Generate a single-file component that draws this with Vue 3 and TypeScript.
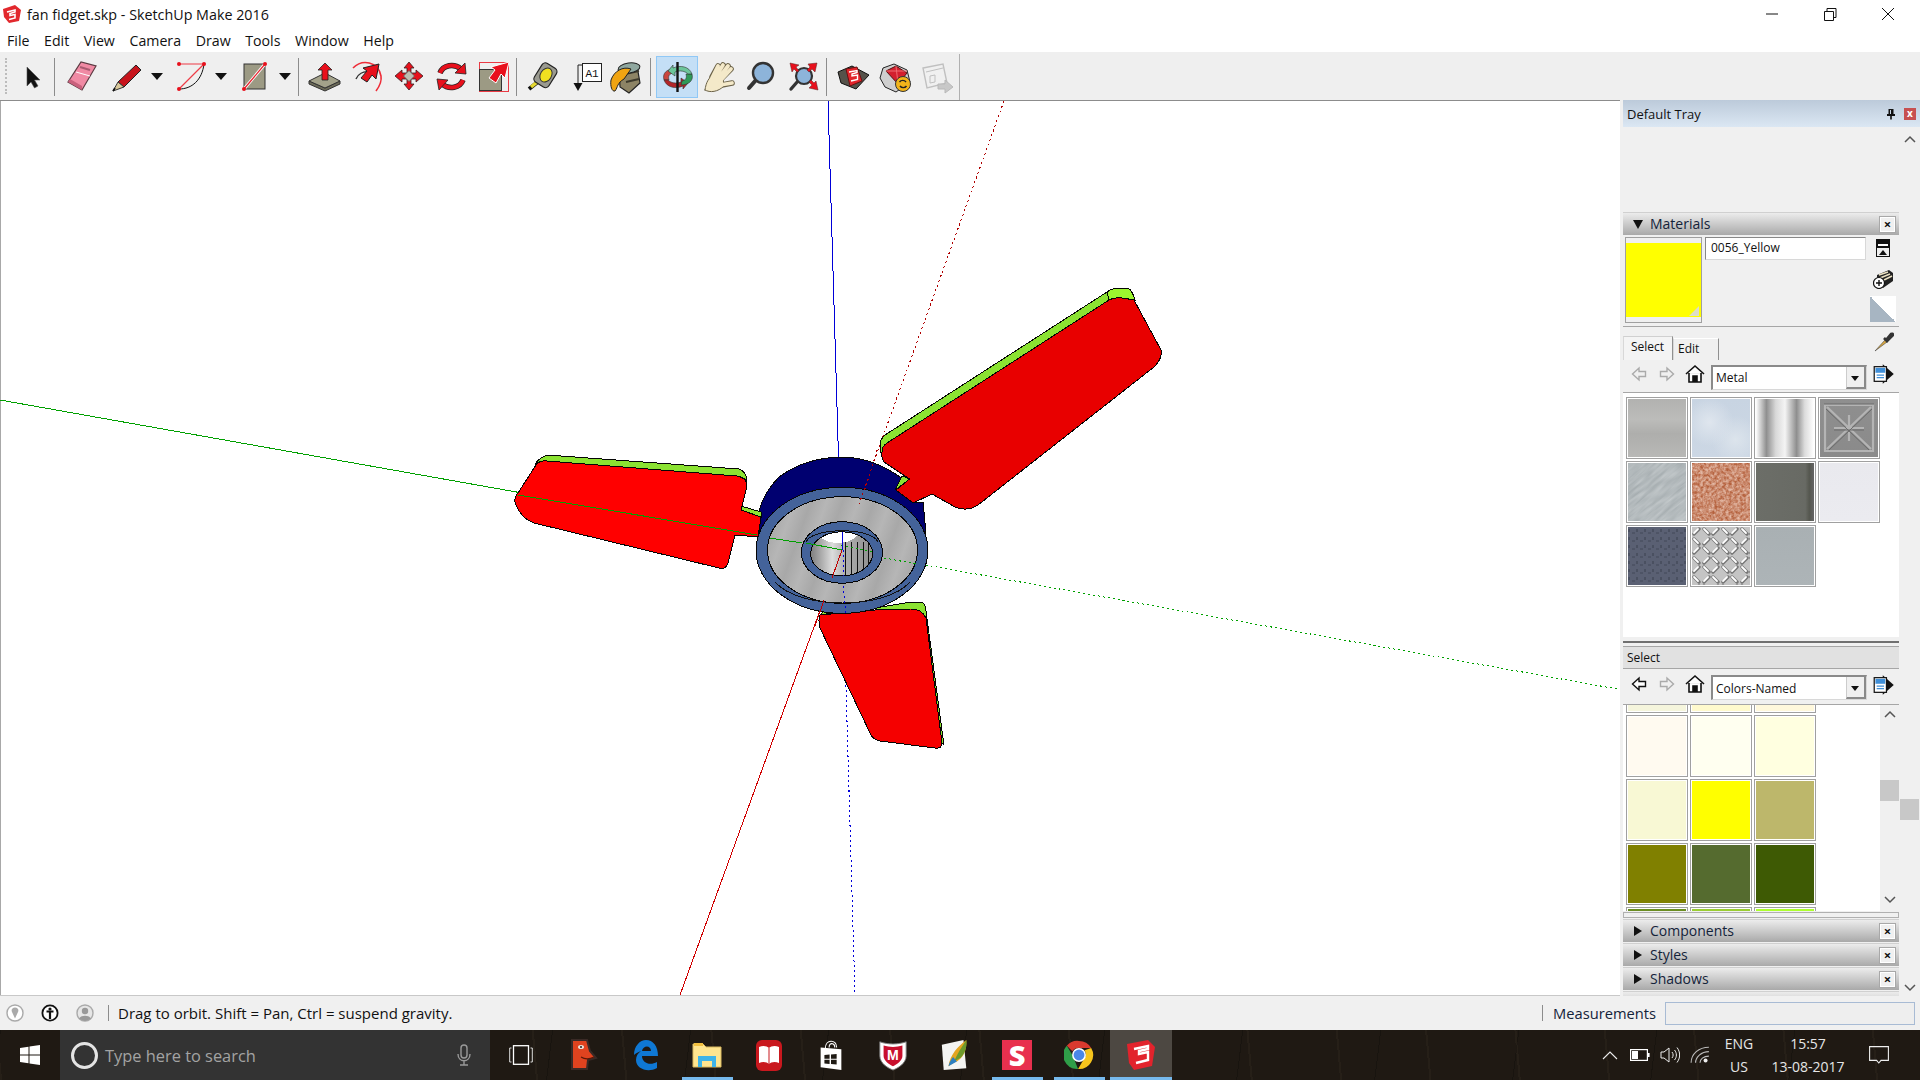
<script setup lang="ts">
const menuItems = ['File', 'Edit', 'View', 'Camera', 'Draw', 'Tools', 'Window', 'Help']
const metalSwatches = ['tex-1', 'tex-2', 'tex-3', 'tex-4', 'tex-5', 'tex-6', 'tex-7', 'tex-8', 'tex-9', 'tex-10', 'tex-11']
const namedColors = [
  '#f5f5dc', '#fffacd', '#fff8dc',
  '#fffaf0', '#fffff0', '#ffffe0',
  '#f8f8d4', '#ffff00', '#bdb76b',
  '#808000', '#556b2f', '#3e5a04',
  '#6b8e23', '#9acd32', '#adff2f',
]
const closedPanels = ['Components', 'Styles', 'Shadows']
const hatchLines = [845, 851, 857, 863, 868]
</script>

<template>
  <div class="app">
    <header class="titlebar">
      <svg class="title-logo" viewBox="0 0 18 18">
        <path d="M0 4 L12 0 L18 5 L16 16 L6 18 L1 12 Z" fill="#e2282d" />
        <path d="M4 7 L12 5 V7 L7 8.5 V10.5 L12 9.5 V13 L6 14.5" stroke="#fff" stroke-width="1.6" fill="none" />
      </svg>
      <span class="title-text">fan fidget.skp - SketchUp Make 2016</span>
      <div class="window-controls">
        <svg viewBox="0 0 14 14"><path d="M1 7 H13" stroke="#111" fill="none" /></svg>
        <svg viewBox="0 0 14 14"><path d="M1.5 4.5 H10.5 V13.5 H1.5 Z M4 4 V1.5 H13 V10.5 H11" stroke="#111" fill="none" /></svg>
        <svg viewBox="0 0 14 14"><path d="M1 1 L13 13 M13 1 L1 13" stroke="#111" fill="none" /></svg>
      </div>
    </header>

    <nav class="menubar">
      <span v-for="item in menuItems" :key="item">{{ item }}</span>
    </nav>

    <div class="toolbar">
      <i class="grip"></i>
      <button class="tool">
        <svg viewBox="0 0 42 42"><path d="M17 11 V30 L21 26 L24.5 32 L28 30 L24.5 24 L30 24 Z" fill="#111" stroke="#555" stroke-width=".6" /></svg>
      </button>
      <i class="sep"></i>
      <button class="tool tool--gap">
        <svg viewBox="0 0 42 42">
          <path d="M8 26 L21 6 L36 10 L22 34 Z" fill="#f08aa4" stroke="#5b3a42" stroke-width="1.2" />
          <path d="M8 26 L22 34 L22 30 L10 23 Z" fill="#c9607c" />
          <path d="M16 16 L30 20" stroke="#fff" stroke-width="1" />
          <path d="M20 11 L30 14" stroke="#a95a70" stroke-width="2" />
        </svg>
      </button>
      <button class="tool">
        <svg viewBox="0 0 42 42">
          <path d="M12 26 L30 9 L35 14 L18 31 Z" fill="#c8141c" stroke="#222" stroke-width="1" />
          <path d="M12 26 L18 31 L7 35 Z" fill="#d9c89a" stroke="#333" stroke-width="1" />
          <path d="M7 35 L9 32" stroke="#111" stroke-width="1.6" />
        </svg>
      </button>
      <i class="dd"></i>
      <button class="tool">
        <svg viewBox="0 0 42 42">
          <path d="M34 8 C32 24 22 33 9 33" stroke="#111" stroke-width="1" fill="none" />
          <path d="M9 8 H34 L9 33" stroke="#ee3b46" stroke-width="1.2" fill="none" />
          <circle cx="9" cy="8" r="2" fill="#e8101c" /><circle cx="34" cy="8" r="2" fill="#e8101c" /><circle cx="9" cy="33" r="2" fill="#e8101c" />
        </svg>
      </button>
      <i class="dd"></i>
      <button class="tool">
        <svg viewBox="0 0 42 42">
          <rect x="10" y="8" width="21" height="25" fill="#9c9a84" stroke="#333" />
          <path d="M31 8 L10 33" stroke="#fff" stroke-width="3" />
          <path d="M31 8 L10 33" stroke="#e8202c" stroke-width="1.2" />
          <circle cx="31" cy="8" r="2" fill="#e8101c" /><circle cx="10" cy="33" r="2" fill="#e8101c" />
        </svg>
      </button>
      <i class="dd dd--last"></i>
      <i class="sep"></i>
      <button class="tool">
        <svg viewBox="0 0 42 42">
          <path d="M5 25 V28 L21 35 L36 28 V25 L21 32 Z" fill="#6c6b58" stroke="#333" />
          <path d="M5 25 L21 17 L36 25 L21 32 Z" fill="#a3a28a" stroke="#333" />
          <path d="M21 7 L28 14 H24 V24 H18 V14 H14 Z" fill="#e8101c" stroke="#222" stroke-width=".8" />
        </svg>
      </button>
      <button class="tool">
        <svg viewBox="0 0 42 42">
          <path d="M7 12 C16 3 32 5 35 20 C36 26 33 31 30 35" stroke="#ee2d38" stroke-width="1.6" fill="none" />
          <path d="M10 23 C12 18 17 15 23 16" stroke="#333" stroke-width="1.4" fill="none" />
          <path d="M33 8 L30 23 L26 19 L21 26 L15 22 L21 15 L17 12 Z" fill="#e8101c" stroke="#222" stroke-width="1" />
        </svg>
      </button>
      <button class="tool">
        <svg viewBox="0 0 42 42">
          <path d="M21 6 L26 12 H23 V17 H28 V14 L35 20 L28 26 V23 H23 V28 H26 L21 34 L16 28 H19 V23 H14 V26 L7 20 L14 14 V17 H19 V12 H16 Z" fill="#e8101c" stroke="#322" stroke-width=".8" />
          <path d="M21 14.5 L26.5 20 L21 25.5 L15.5 20 Z" fill="#bdbdb2" stroke="#555" stroke-width=".8" />
        </svg>
      </button>
      <button class="tool">
        <svg viewBox="0 0 42 42">
          <path d="M10 17 C13 9 24 7 31 13" stroke="#222" stroke-width="5.5" fill="none" />
          <path d="M10 17 C13 9 24 7 31 13" stroke="#e8101c" stroke-width="4" fill="none" />
          <path d="M25 17 L35 7 L36 18 Z" fill="#e8101c" stroke="#222" stroke-width=".8" />
          <path d="M33 24 C30 32 19 34 12 28" stroke="#222" stroke-width="5.5" fill="none" />
          <path d="M33 24 C30 32 19 34 12 28" stroke="#e8101c" stroke-width="4" fill="none" />
          <path d="M18 24 L7 23 L9 34 Z" fill="#e8101c" stroke="#222" stroke-width=".8" />
        </svg>
      </button>
      <button class="tool">
        <svg viewBox="0 0 42 42">
          <rect x="7.5" y="6.5" width="29" height="29" fill="none" stroke="#e93a44" />
          <rect x="7.5" y="13.5" width="22" height="21" fill="#9c9a84" stroke="#333" />
          <path d="M37 6 L33 22 L29 18 L24 27 L17 22 L23 14 L19 11 Z" fill="#e8101c" stroke="#fff" stroke-width="1" />
        </svg>
      </button>
      <i class="sep"></i>
      <button class="tool">
        <svg viewBox="2 0 42 42">
          <path d="M9 33 L19 25" stroke="#111" stroke-width="4" />
          <path d="M11 31 L21 23" stroke="#e4d830" stroke-width="3.4" />
          <rect x="17" y="8" width="17" height="22" rx="4" transform="rotate(32 25 19)" fill="#9a9a90" stroke="#222" stroke-width="1.2" />
          <ellipse cx="26" cy="19" rx="5.5" ry="7.5" transform="rotate(32 26 19)" fill="#f0e020" stroke="#333" />
        </svg>
      </button>
      <button class="tool">
        <svg viewBox="0 0 42 42">
          <path d="M18 9 H14 V28" stroke="#222" fill="none" />
          <path d="M9.5 27 H18.5 L14 35 Z" fill="#111" />
          <rect x="18.5" y="7.5" width="19" height="18" fill="#fff" stroke="#222" />
          <text x="28" y="20.5" class="a1">A1</text>
        </svg>
      </button>
      <button class="tool">
        <svg viewBox="4 0 42 42">
          <path d="M17 12 L35 10 L38 27 L27 37 L18 31 Z" fill="#8d8465" stroke="#222" stroke-width="1.2" />
          <path d="M23 18 L37 15 M24 26 L37 23" stroke="#3d3a2c" stroke-width="2" />
          <ellipse cx="27" cy="12" rx="11" ry="5" transform="rotate(-8 27 12)" fill="#8fa79f" stroke="#222" />
          <path d="M29 13 C21 10 12 15 9 24 C8 30 10 36 13 35 C16 31 15 27 22 23 Z" fill="#f0a412" stroke="#222" />
        </svg>
      </button>
      <i class="sep"></i>
      <button class="tool tool--active">
        <svg viewBox="0 0 42 42">
          <path d="M8 24 C6 17 11 13 18 13 L17 17 C13 18 12 20 13 24 Z" fill="#c9473f" stroke="#333" stroke-width=".6" />
          <path d="M8 24 C11 32 20 33 27 30 V33 L32 27 L25 22 V26 C20 28 15 27 12 24 Z" fill="#b3262a" stroke="#333" stroke-width=".6" />
          <path d="M36 18 C38 25 32 29 25 29 L26 25 C30 24 31 22 30 18 Z" fill="#2f9a58" stroke="#333" stroke-width=".6" />
          <path d="M36 18 C33 10 24 9 17 12 V9 L12 15 L19 20 V16 C24 14 29 15 32 18 Z" fill="#6cc59a" stroke="#333" stroke-width=".6" />
          <path d="M21.5 6 V36" stroke="#111" stroke-width="2.4" />
        </svg>
      </button>
      <button class="tool">
        <svg viewBox="0 0 42 42" stroke-linecap="round">
          <g stroke="#6b6248" stroke-width="5.6" fill="none">
            <path d="M14 21 L20 10 M17 21 L25 9 M20 22 L30 10 M22 24 L33 13 M24 29 L34 27" />
          </g>
          <path d="M7 34 C8 26 11 21 16 19 L25 22 L26 30 C20 36 12 37 7 34 Z" fill="#f4e9c9" stroke="#6b6248" />
          <g stroke="#f4e9c9" stroke-width="3.8" fill="none">
            <path d="M14 22 L20 10 M17 22 L25 9 M20 23 L30 10 M22 25 L33 13 M22 29 L34 27" />
          </g>
        </svg>
      </button>
      <button class="tool">
        <svg viewBox="0 0 42 42">
          <path d="M16 24 L9 32" stroke="#333" stroke-width="4" stroke-linecap="round" />
          <circle cx="23" cy="17" r="10" fill="#8db4da" stroke="#333" stroke-width="2.4" />
        </svg>
      </button>
      <button class="tool">
        <svg viewBox="0 0 42 42">
          <path d="M16 25 L9 33" stroke="#333" stroke-width="3.4" stroke-linecap="round" />
          <circle cx="22" cy="20" r="8" fill="#8db4da" stroke="#333" stroke-width="2.2" />
          <path d="M8 7 L17 9 L14 11 L17 15 L15 16 L12 13 L10 16 Z M35 7 L33 16 L30 13 L27 16 L25 14 L28 11 L26 8 Z M36 34 L27 32 L30 29 L27 26 L29 24 L32 27 L34 25 Z" fill="#e8101c" stroke="#522" stroke-width=".5" />
        </svg>
      </button>
      <i class="sep"></i>
      <button class="tool">
        <svg viewBox="0 0 42 42">
          <path d="M6 16 L20 10 L37 19 L24 33 L9 27 Z" fill="#55524a" stroke="#111" />
          <path d="M14 13 L25 11 L30 25 L18 30 Z" fill="#e3242b" stroke="#611" />
          <path d="M17 16 L25 14.5 V16.5 L20 18 V20 L25.5 19 V23.5 L19 25" stroke="#fff" stroke-width="1.4" fill="none" />
        </svg>
      </button>
      <button class="tool">
        <svg viewBox="0 0 42 42">
          <path d="M6 22 L9 12 L20 8 L33 14 L36 26 L22 36 L11 31 Z" fill="#cfcfcf" stroke="#222" />
          <path d="M12 15 L22 10 L33 17 L24 28 Z" fill="#d3202e" stroke="#511" />
          <path d="M12 15 H33 M22 10 L24 28" stroke="#f06a70" />
          <circle cx="29" cy="28" r="7.5" fill="#f2b41a" stroke="#333" />
          <path d="M25.5 26 A4 4 0 0 1 32 26 M32.5 30 A4 4 0 0 1 26 30" stroke="#222" stroke-width="1.4" fill="none" />
        </svg>
      </button>
      <button class="tool">
        <svg viewBox="0 0 42 42" opacity=".45">
          <path d="M7 12 L27 8 L31 27 L11 32 Z" fill="#f2f2f2" stroke="#888" stroke-width="1.4" />
          <path d="M10 16 L27 12 M14 20 L19 19 V26 L14 27 Z" stroke="#888" fill="none" />
          <path d="M22 28 L29 28 V24 L37 31 L29 37 V33 L22 33 Z" fill="#9a9a9a" stroke="#777" />
        </svg>
      </button>
      <i class="sep sep--end"></i>
    </div>

    <main class="workspace">
      <section class="viewport">
        <svg class="scene" viewBox="0 101 1620 894" shape-rendering="crispEdges">
          <defs>
            <linearGradient id="faceGrey" gradientUnits="userSpaceOnUse" x1="780" y1="500" x2="794" y2="505" spreadMethod="reflect">
              <stop offset="0" stop-color="#a8a8a8" />
              <stop offset="1" stop-color="#b6b6b6" />
            </linearGradient>
            <linearGradient id="boreGrey" x1="0" x2="1" y1="0" y2="0">
              <stop offset="0" stop-color="#7d7d7d" />
              <stop offset=".35" stop-color="#dcdcdc" />
              <stop offset=".55" stop-color="#b0b0b0" />
              <stop offset="1" stop-color="#8e8e8e" />
            </linearGradient>
            <clipPath id="bore"><ellipse cx="841.6" cy="553.8" rx="31" ry="22" /></clipPath>
          </defs>

          <path d="M828 101 L838.5 457" stroke="#0000d8" fill="none" />
          <path d="M842 550 L855 995" stroke="#0000d8" stroke-dasharray="2 3" fill="none" />
          <path d="M0 400 L842 550" stroke="#00a000" fill="none" />
          <path d="M842 550 L1620 689.5" stroke="#00a000" stroke-dasharray="2 3" fill="none" />
          <path d="M842 550 L680 995" stroke="#d00000" fill="none" />
          <path d="M842 550 L1004 101" stroke="#b00000" stroke-dasharray="2 3" fill="none" />

          <path class="edge" d="M759 512 Q762 495 779 477 Q806 457 844 457 Q873 458 900 477 L915 503 L923 502 L926 533 L842 600 L759 560 Z" fill="#000070" />
          <path d="M877 450 L859 510" stroke="#b00000" stroke-dasharray="2 3" fill="none" />

          <path class="edge" d="M880 452 L880 443 Q882 437 885 435 L1107 292 Q1112 288 1120 288 L1128 288 Q1132 290 1135 300 L1122 298 Q1114 297 1109 300 L887 443 Q882 446 882 452 Z" fill="#8be232" />
          <path class="edge" d="M1107 292 Q1112 288 1120 288 L1128 288 Q1132 290 1135 300 L1122 298 Q1114 297 1109 300 Z" fill="#9cf52f" />
          <path class="edge" d="M895 490 L902 476 L910 479 Z" fill="#8be232" />
          <path class="edge" d="M882 452 Q882 446 887 443 L1109 300 Q1114 297 1122 298 L1134 300 L1161 350 Q1163 358 1154 367 L978 505 Q967 512 955 507 L932 494 L913 503 L896 490 L909.5 479 L884 462 Q881 458 882 452 Z" fill="#e80000" />

          <path class="edge" d="M741 506 L761 512 L761 517 L741 510 Z" fill="#8be232" />
          <path class="edge" d="M535 465 Q537 459 547 455 L739 469 Q747 472 747 482 Q747 478 737 476 L547 461 Q540 460 535 465 Z" fill="#8be232" />
          <path class="edge" d="M515 502 Q514 497 518 493 L536 465 Q540 460 547 461 L737 476 Q747 478 747 486 L741 510 L761 517 L758 537 L735 535 L728 563 Q726 570 719 568 L534 523 Q520 518 515 502 Z" fill="#ff0000" />
          <path d="M518 495 L757 535" stroke="#00a000" fill="none" />

          <path class="edge" d="M820 615 L824 611 L838 612 Z" fill="#8be232" />
          <path class="edge" d="M875 610 L875 608 L911 602 L922 602 Q926 605 926 611 L943 738 L943 744 L942 743 L926 618 Q922 609 911 609 Z" fill="#8be232" />
          <path class="edge" d="M820 615 L875 610 L911 609 Q922 609 926 618 L942 743 Q942 749 935 748 L880 741 Q873 739 871 735 L820 628 Q818 620 820 615 Z" fill="#f50000" />
          <path d="M846 690 L855 995" stroke="#0000d8" stroke-dasharray="2 3" fill="none" />

          <ellipse class="edge" cx="842" cy="550.3" rx="86" ry="63" fill="#44639a" />
          <ellipse class="edge" cx="842.5" cy="550" rx="75" ry="53.3" fill="url(#faceGrey)" />
          <path d="M775 582 C800 610 885 610 910 582" stroke="#111" fill="none" />
          <path d="M770 538 L802 543" stroke="#00a000" fill="none" />
          <path d="M884 558 L917 564" stroke="#00a000" stroke-dasharray="2 3" fill="none" />
          <path d="M868 479 L858 507" stroke="#b00000" stroke-dasharray="2 3" fill="none" />
          <path d="M824 600 L815 626" stroke="#c00000" fill="none" />
          <path d="M843 586 L846 614" stroke="#0000d8" stroke-dasharray="2 3" fill="none" />
          <ellipse class="edge" cx="842" cy="552.5" rx="40.6" ry="30.8" fill="#44639a" />
          <path d="M806 542 C812 527 872 527 878 542" stroke="#111" fill="none" />

          <g clip-path="url(#bore)">
            <ellipse cx="841.6" cy="553.8" rx="31" ry="22" fill="url(#boreGrey)" />
            <ellipse cx="838" cy="527" rx="23" ry="16" fill="#fff" />
            <path v-for="x in hatchLines" :key="x" :d="`M${x} 542 V576`" stroke="#111" fill="none" />
            <path d="M841 545 L873 552" stroke="#00a000" stroke-dasharray="2 3" fill="none" />
          </g>
          <ellipse class="edge" cx="841.6" cy="553.8" rx="31" ry="22" fill="none" />
          <path d="M842 532 V550" stroke="#0000d8" fill="none" />
          <path d="M806 543 L842 550" stroke="#00a000" fill="none" />
          <path d="M842 550 L832 578" stroke="#c00000" fill="none" />
          <path d="M843 550 L844 576" stroke="#0000d8" stroke-dasharray="2 3" fill="none" />
        </svg>
      </section>

      <aside class="tray">
        <div class="tray-title">
          <span>Default Tray</span>
          <svg class="pin" viewBox="0 0 10 12"><path d="M2.5 1 H7.5 V6 H9 V8 H5.8 V11.5 H4.2 V8 H1 V6 H2.5 Z M4 2 V6 H5 V2 Z" fill="#111" fill-rule="evenodd" /></svg>
          <span class="tray-close">x</span>
        </div>
        <div class="tray-body">
          <div class="panel">
            <div class="tray-blank"></div>

            <div class="panel-head">
              <i class="tri-down"></i>
              <span>Materials</span>
              <span class="close-box">×</span>
            </div>
            <div class="material">
              <div class="material-preview"><i class="preview-corner"></i></div>
              <div class="material-name">0056_Yellow</div>
              <div class="material-actions">
                <svg viewBox="0 0 14 18" class="act-a">
                  <rect width="14" height="18" fill="#111" />
                  <rect x="2" y="5" width="10" height="2" fill="#fff" />
                  <rect x="1" y="9" width="12" height="8" fill="#eee" />
                  <path d="M3 16 L7 11 L11 16 Z" fill="#111" />
                </svg>
                <svg viewBox="0 0 20 20" class="act-b">
                  <path d="M4 6 L16 1 L20 4 V12 L10 19 L4 14 Z" fill="#222" />
                  <path d="M6 6 L15 3 M7 9 L17 5 M9 12 L19 7" stroke="#e9dfc0" stroke-width="1.6" />
                  <circle cx="6" cy="14" r="5.5" fill="#fff" stroke="#111" stroke-width="1.2" />
                  <path d="M3 14 H9 M6 11 V17" stroke="#111" stroke-width="1.4" />
                </svg>
                <div class="act-c"></div>
              </div>
            </div>

            <div class="tabs">
              <span class="tab tab--on">Select</span>
              <span class="tab">Edit</span>
              <svg class="dropper" viewBox="0 0 20 20">
                <path d="M1 19 L11 8 L13 10 Z" fill="#d8a740" stroke="#444" stroke-width=".6" />
                <path d="M10 6 L14 10 M12 8 L17 2 C19 1 20 3 18 4 L12 10" stroke="#333" stroke-width="2.6" fill="none" />
              </svg>
            </div>
            <div class="nav-row">
              <svg class="nav-arrow" viewBox="0 0 16 16"><path d="M1.5 8 L8 2 V5.5 H14.5 V10.5 H8 V14 Z" fill="#f0f0f0" stroke="#aaa" stroke-width="1.4" /></svg>
              <svg class="nav-arrow" viewBox="0 0 16 16"><path d="M14.5 8 L8 2 V5.5 H1.5 V10.5 H8 V14 Z" fill="#f0f0f0" stroke="#aaa" stroke-width="1.4" /></svg>
              <svg class="nav-home" viewBox="0 0 20 20"><path d="M1 10 L10 2 L19 10 M4 9 V18 H16 V9 M8 18 V12 H12 V18 Z" stroke="#111" stroke-width="1.6" fill="#fff" /><rect x="8" y="12" width="4" height="6" fill="#111" /></svg>
              <div class="combo"><span>Metal</span><i class="combo-btn"></i></div>
              <svg class="nav-export" viewBox="0 0 18 18"><path d="M8 1 L17 9 L8 17 Z" fill="#111" /><rect x="1" y="3" width="10" height="12" fill="#fff" stroke="#111" /><rect x="2" y="4" width="8" height="4" fill="#3f8fd8" /><path d="M3 10 H9 M3 12 H9" stroke="#3f8fd8" /></svg>
            </div>

            <div class="swatch-grid swatch-grid--metal">
              <div v-for="tex in metalSwatches" :key="tex" class="swatch" :class="tex">
                <svg v-if="tex === 'tex-4'" class="swatch-art" viewBox="0 0 58 58">
                  <g fill="none" stroke="#b4b4b4" stroke-width="2.2">
                    <path d="M5 6 H53 V52 H5 Z M7 8 L51 50 M51 8 L7 50 M14 29 H44 M29 16 V42" />
                  </g>
                  <g fill="none" stroke="#6a6a6a" stroke-width="1">
                    <path d="M4 5 H54 M6 10 L49 51 M52 10 L9 51 M14 31 H44" />
                  </g>
                </svg>
                <svg v-else-if="tex === 'tex-5'" class="swatch-art" viewBox="0 0 58 58">
                  <filter id="brushed"><feTurbulence type="fractalNoise" baseFrequency=".05 .35" numOctaves="2" seed="4" /><feColorMatrix values="0 0 0 0 .95  0 0 0 0 .97  0 0 0 0 .98  .5 0 0 0 0" /></filter>
                  <rect x="-30" y="-30" width="120" height="120" filter="url(#brushed)" transform="rotate(-40 29 29)" />
                </svg>
                <svg v-else-if="tex === 'tex-6'" class="swatch-art" viewBox="0 0 58 58">
                  <filter id="rust"><feTurbulence type="fractalNoise" baseFrequency=".35" numOctaves="3" seed="9" /><feColorMatrix values="0 0 0 0 .86  0 0 0 0 .62  0 0 0 0 .52  1.4 0 0 0 -.3" /></filter>
                  <rect width="58" height="58" filter="url(#rust)" />
                </svg>
                <svg v-else-if="tex === 'tex-9'" class="swatch-art" viewBox="0 0 58 58">
                  <defs>
                    <pattern id="tread" width="8" height="8" patternUnits="userSpaceOnUse">
                      <path d="M1 2 V5" stroke="#3a3f4e" />
                      <path d="M4 6 H7" stroke="#424858" />
                    </pattern>
                  </defs>
                  <rect width="58" height="58" fill="url(#tread)" />
                </svg>
                <svg v-else-if="tex === 'tex-10'" class="swatch-art" viewBox="0 0 58 58">
                  <defs>
                    <pattern id="plate" width="19" height="19" patternUnits="userSpaceOnUse">
                      <path d="M2 7 L7 2 M12 17 L17 12" stroke="#777" stroke-width="3.4" stroke-linecap="round" />
                      <path d="M2 6 L6 2 M12 16 L16 12" stroke="#fff" stroke-width="1.8" stroke-linecap="round" />
                      <path d="M12 2 L17 7 M2 12 L7 17" stroke="#777" stroke-width="3.4" stroke-linecap="round" />
                      <path d="M12 2 L16 6 M2 12 L6 16" stroke="#fff" stroke-width="1.8" stroke-linecap="round" />
                    </pattern>
                  </defs>
                  <rect width="58" height="58" fill="url(#plate)" />
                </svg>
              </div>
            </div>

            <div class="split"></div>
            <div class="sub-head">Select</div>
            <div class="nav-row nav-row--second">
              <svg class="nav-arrow" viewBox="0 0 16 16"><path d="M1.5 8 L8 2 V5.5 H14.5 V10.5 H8 V14 Z" fill="#fff" stroke="#111" stroke-width="1.4" /></svg>
              <svg class="nav-arrow" viewBox="0 0 16 16"><path d="M14.5 8 L8 2 V5.5 H1.5 V10.5 H8 V14 Z" fill="#f0f0f0" stroke="#aaa" stroke-width="1.4" /></svg>
              <svg class="nav-home" viewBox="0 0 20 20"><path d="M1 10 L10 2 L19 10 M4 9 V18 H16 V9 M8 18 V12 H12 V18 Z" stroke="#111" stroke-width="1.6" fill="#fff" /><rect x="8" y="12" width="4" height="6" fill="#111" /></svg>
              <div class="combo"><span>Colors-Named</span><i class="combo-btn"></i></div>
              <svg class="nav-export" viewBox="0 0 18 18"><path d="M8 1 L17 9 L8 17 Z" fill="#111" /><rect x="1" y="3" width="10" height="12" fill="#fff" stroke="#111" /><rect x="2" y="4" width="8" height="4" fill="#3f8fd8" /><path d="M3 10 H9 M3 12 H9" stroke="#3f8fd8" /></svg>
            </div>

            <div class="color-list">
              <div class="swatch-grid swatch-grid--colors">
                <div v-for="color in namedColors" :key="color" class="swatch" :style="{ backgroundColor: color }"></div>
              </div>
              <div class="inner-scroll">
                <svg class="chev" viewBox="0 0 12 8"><path d="M1 7 L6 2 L11 7" stroke="#555" stroke-width="1.5" fill="none" /></svg>
                <i class="thumb"></i>
                <svg class="chev chev--end" viewBox="0 0 12 8"><path d="M1 1 L6 6 L11 1" stroke="#555" stroke-width="1.5" fill="none" /></svg>
              </div>
            </div>
            <div class="list-foot"></div>

            <div v-for="name in closedPanels" :key="name" class="panel-head panel-head--closed">
              <i class="tri-right"></i>
              <span>{{ name }}</span>
              <span class="close-box">×</span>
            </div>
            <div class="panel-head panel-head--closed"></div>
          </div>

          <div class="outer-scroll">
            <svg class="chev chev--outer" viewBox="0 0 12 8"><path d="M1 7 L6 2 L11 7" stroke="#555" stroke-width="1.5" fill="none" /></svg>
            <i class="thumb thumb--outer"></i>
            <svg class="chev chev--outer-end" viewBox="0 0 12 8"><path d="M1 1 L6 6 L11 1" stroke="#555" stroke-width="1.5" fill="none" /></svg>
          </div>
        </div>
      </aside>
    </main>

    <footer class="statusbar">
      <svg class="status-icon" viewBox="0 0 18 18"><circle cx="9" cy="9" r="8" fill="#fff" stroke="#aaa" stroke-width="1.4" /><path d="M9 3.5 C12 3.5 13 6 12 8 L9 14.5 L6 8 C5 6 6 3.5 9 3.5 Z" fill="#aaa" /></svg>
      <svg class="status-icon" viewBox="0 0 18 18"><circle cx="9" cy="9" r="7.6" fill="#fff" stroke="#111" stroke-width="1.8" /><circle cx="9" cy="5" r="1.6" fill="#111" /><path d="M5.5 7.5 H12.5 M9 7.5 V15" stroke="#111" stroke-width="2.2" /></svg>
      <svg class="status-icon" viewBox="0 0 18 18"><circle cx="9" cy="9" r="8" fill="#e6e6e6" stroke="#aaa" stroke-width="1.4" /><circle cx="9" cy="7" r="3.2" fill="#999" /><path d="M3 15 C4 10.5 14 10.5 15 15 L9 17 Z" fill="#999" /></svg>
      <i class="status-sep"></i>
      <span class="status-text">Drag to orbit. Shift = Pan, Ctrl = suspend gravity.</span>
      <i class="status-sep status-sep--right"></i>
      <span class="measure-label">Measurements</span>
      <div class="measure-input"></div>
    </footer>

    <div class="taskbar">
      <div class="start">
        <svg viewBox="0 0 20 20"><path d="M0 3 L8.5 1.8 V9.5 H0 Z M9.5 1.6 L20 0 V9.5 H9.5 Z M0 10.5 H8.5 V18.2 L0 17 Z M9.5 10.5 H20 V20 L9.5 18.4 Z" fill="#fff" /></svg>
      </div>
      <div class="search">
        <i class="cortana"></i>
        <span class="search-text">Type here to search</span>
        <svg class="mic" viewBox="0 0 14 22"><rect x="4" y="1" width="6" height="13" rx="3" fill="none" stroke="#999" stroke-width="1.4" /><path d="M1 10 C1 19 13 19 13 10 M7 17 V21 M3 21 H11" fill="none" stroke="#999" stroke-width="1.4" /></svg>
      </div>
      <div class="app-btn">
        <svg class="ico-task" viewBox="0 0 24 20"><rect x="4.5" y=".7" width="15" height="18.6" fill="none" stroke="#fff" stroke-width="1.3" /><path d="M2.5 3 H.7 V17 H2.5 M21.5 3 H23.3 V17 H21.5" fill="none" stroke="#ddd" /></svg>
      </div>
      <div class="app-btn">
        <svg class="ico" viewBox="0 0 28 32"><path d="M3 1 H18 L21 12 L27 19 L19 21 L18 30 H3 Z" fill="#e0431f" stroke="#3a2a26" stroke-width="2" /><ellipse cx="12" cy="8" rx="3" ry="2" fill="#e8e0d8" /><circle cx="12" cy="8" r="1" fill="#222" /><path d="M12 18 C17 21 21 20 25 18" stroke="#5a1808" stroke-width="1.2" fill="none" /></svg>
      </div>
      <div class="app-btn">
        <svg class="ico" viewBox="0 0 28 32"><path d="M3 16 C3 7 9 1 15 1 C22 1 27 7 27 17 H11 C11 24 19 27 26 23 V29 C17 34 5 30 5 21 C5 17 7 14 10 12 C7 13 4 15 3 16 Z M11 12 H20 C20 6 12 6 11 12 Z" fill="#0f78d4" fill-rule="evenodd" /></svg>
      </div>
      <div class="app-btn app-btn--open">
        <svg class="ico" viewBox="0 0 30 30"><path d="M1 4 H11 L14 7 H29 V27 H1 Z" fill="#ffe58f" stroke="#d8b860" /><rect x="2" y="3" width="9" height="3" fill="#f2c040" /><path d="M6 27 V16 H24 V27 H20 V21 H10 V27 Z" fill="#3fb4e8" /></svg>
      </div>
      <div class="app-btn">
        <svg class="ico" viewBox="0 0 30 32"><rect x="2" y="1" width="26" height="31" rx="6" fill="#c9181e" /><path d="M5 8 C9 6 13 7 15 9 C17 7 21 6 25 8 V24 C21 22 17 23 15 25 C13 23 9 22 5 24 Z" fill="#fff" /><path d="M15 9 V25" stroke="#c9181e" /></svg>
      </div>
      <div class="app-btn">
        <svg class="ico" viewBox="0 0 30 34"><path d="M9 10 C9 0 21 0 21 9 M13 9 C13 3 19 4 19 9" stroke="#fff" stroke-width="1.2" fill="none" /><path d="M4 9 L26 11 V33 L4 30 Z" fill="#fff" /><path d="M8 17 L13.5 16.5 V21 H8 Z M15 16.5 L21 16 V21 H15 Z M8 22 H13.5 V26.5 L8 26 Z M15 22 H21 V27 L15 26.5 Z" fill="#1f1a14" /></svg>
      </div>
      <div class="app-btn">
        <svg class="ico" viewBox="0 0 30 34"><path d="M1 3 C10 6 20 6 29 3 V18 C29 26 20 31 15 33 C10 31 1 26 1 18 Z" fill="#fff" stroke="#777" /><path d="M5 7 C11 9 19 9 25 7 V18 C25 23 19 27 15 29 C11 27 5 23 5 18 Z" fill="#c8102e" /><text x="15" y="22" class="mcafee">M</text></svg>
      </div>
      <div class="app-btn">
        <svg class="ico" viewBox="0 0 30 34"><path d="M1 6 L24 1 L27 31 L3 33 Z" fill="#f4f4f2" /><path d="M8 29 C10 16 18 8 27 1 C28 10 24 22 14 25 Z" fill="#e4a520" /><path d="M14 24 C17 16 22 9 27 1 C28 9 25 16 21 20 Z" fill="#6d9a2c" /><path d="M8 29 C9 25 11 21 13 19 L17 24 Z" fill="#2d7fc0" /></svg>
      </div>
      <div class="app-btn app-btn--open">
        <div class="s-tile">S</div>
      </div>
      <div class="app-btn app-btn--open">
        <svg class="ico" viewBox="0 0 32 32">
          <path d="M16 1 A15 15 0 0 1 29 8.5 H16 A7.5 7.5 0 0 0 9 12 L3 6 A15 15 0 0 1 16 1 Z" fill="#d93a2f" />
          <path d="M3 6 L9.5 17 L15 31 A15 15 0 0 1 3 6 Z" fill="#2f9e48" />
          <path d="M29 8.5 A15 15 0 0 1 15 31 L22 19 A7.5 7.5 0 0 0 22 11 Z" fill="#f6c41c" />
          <circle cx="16" cy="16" r="7.4" fill="#fff" /><circle cx="16" cy="16" r="5.8" fill="#4a87e8" />
        </svg>
      </div>
      <div class="app-btn app-btn--open app-btn--current">
        <svg class="ico" viewBox="0 0 30 32"><path d="M1 5 L22 1 L29 8 L26 27 L8 31 L3 24 Z" fill="#e2232c" /><path d="M8 10 L22 7 V10 L13 12 V15 L22 13 V21 L10 24" stroke="#fff" stroke-width="2.4" fill="none" /></svg>
      </div>
      <div class="sys-tray">
        <svg class="sys-chev" viewBox="0 0 16 9"><path d="M1 8 L8 1 L15 8" stroke="#eee" stroke-width="1.1" fill="none" /></svg>
        <svg class="sys-ico" viewBox="0 0 20 12"><rect x=".6" y=".6" width="16.8" height="10.8" fill="none" stroke="#fff" stroke-width="1.2" /><rect x="2" y="2" width="6" height="8" fill="#fff" /><rect x="18" y="4" width="1.6" height="4" fill="#fff" /></svg>
        <svg class="sys-ico" viewBox="0 0 20 18"><path d="M1 6 H4 L9 2 V16 L4 12 H1 Z M12 6 C13.5 8 13.5 10 12 12 M14.5 4 C17 7 17 11 14.5 14 M17 1.5 C20.5 6 20.5 12 17 16.5" stroke="#eee" fill="none" /></svg>
        <svg class="sys-ico" viewBox="0 0 18 16"><path d="M1 15 C1 7 8 1 17 1 M5 15 C5 10 10 5 17 5 M9 15 C9 12 12 9 17 9" stroke="#bbb" fill="none" /><circle cx="14" cy="13" r="1.8" fill="#eee" /></svg>
        <div class="sys-lang"><span>ENG</span><span>US</span></div>
        <div class="sys-clock"><span>15:57</span><span>13-08-2017</span></div>
        <svg class="sys-note" viewBox="0 0 20 18"><path d="M.6 .6 H19.4 V14.4 H12 L9.8 17 L7.6 14.4 H.6 Z" stroke="#eee" stroke-width="1.1" fill="none" /></svg>
      </div>
    </div>
  </div>
</template>

<style scoped>
.app {
  width: 1920px;
  height: 1080px;
  display: flex;
  flex-direction: column;
  overflow: hidden;
  background: #f0f0f0;
  color: #111;
  font-family: "Open Sans", "Noto Sans", sans-serif;
}

.titlebar {
  height: 28px;
  display: flex;
  align-items: center;
  flex: none;
  background: #fff;
  padding-left: 3px;
}
.title-logo {
  width: 18px;
  height: 18px;
  margin-right: 6px;
}
.title-text {
  font-size: 14.3px;
}
.window-controls {
  display: flex;
  margin-left: auto;
  margin-right: 25px;
  gap: 44px;
}
.window-controls svg {
  width: 14px;
  height: 14px;
}

.menubar {
  height: 24px;
  display: flex;
  align-items: center;
  flex: none;
  background: #fff;
  padding-left: 7px;
  gap: 14.6px;
  font-size: 14.2px;
}

.toolbar {
  height: 48px;
  display: flex;
  align-items: center;
  flex: none;
  box-sizing: border-box;
  padding: 2px 0 0 10px;
  background: #efefef;
  position: relative;
}
.grip {
  position: absolute;
  left: 5px;
  top: 6px;
  height: 36px;
  border-left: 2px dotted #bcbcbc;
}
.tool {
  width: 42px;
  height: 42px;
  flex: none;
  padding: 0;
  border: 1px solid transparent;
  background: none;
}
.tool svg {
  width: 42px;
  height: 42px;
  display: block;
  margin: -1px;
}
.tool--gap {
  margin-right: 4px;
}
.tool--active {
  background: #c4dff6;
  border-color: #90c8f6;
}
.a1 {
  font-family: "Liberation Mono", monospace;
  font-size: 11px;
  text-anchor: middle;
  fill: #111;
}
.sep {
  width: 1px;
  height: 38px;
  flex: none;
  margin: 0 5px 0 2px;
  background: #8c8c8c;
}
.sep--end {
  height: 46px;
  background: #b0b0b0;
  margin-left: 1px;
}
.dd {
  width: 17px;
  flex: none;
  margin-right: 5px;
  display: flex;
  justify-content: center;
  position: relative;
  height: 8px;
}
.dd::after {
  content: "";
  border-left: 6px solid transparent;
  border-right: 6px solid transparent;
  border-top: 7px solid #111;
}
.dd--last {
  margin-right: 3px;
}

.workspace {
  height: 896px;
  flex: none;
  display: flex;
  overflow: hidden;
}
.viewport {
  width: 1620px;
  flex: none;
  border-top: 1px solid #8c8c8c;
  border-bottom: 1px solid #c8c8c8;
  background: #fff;
  box-shadow: inset 1px 0 0 #a8a8a8;
}
.scene {
  display: block;
  width: 1620px;
  height: 894px;
}
.edge {
  stroke: #050505;
  stroke-width: 1;
}

.tray {
  width: 297px;
  flex: none;
  margin-left: 3px;
  display: flex;
  flex-direction: column;
}
.tray-title {
  height: 27px;
  flex: none;
  display: flex;
  align-items: center;
  padding: 0 4px 0 4px;
  background: linear-gradient(#bccada, #dbe7f3);
  font-size: 13px;
}
.pin {
  width: 10px;
  height: 12px;
  margin-left: auto;
  margin-right: 8px;
}
.tray-close {
  width: 12px;
  height: 12px;
  background: #c75050;
  color: #fff;
  font-size: 10px;
  font-weight: 700;
  line-height: 11px;
  text-align: center;
}
.tray-body {
  display: flex;
  flex: 1;
  min-height: 0;
}
.panel {
  width: 276px;
  flex: none;
  display: flex;
  flex-direction: column;
  overflow: hidden;
}
.tray-blank {
  height: 85px;
  flex: none;
}
.panel-head {
  height: 23px;
  flex: none;
  display: flex;
  align-items: center;
  box-sizing: border-box;
  padding: 0 3px 2px 10px;
  border-top: 1px solid #d0d0d0;
  background: linear-gradient(#ececec, #a9a9a9);
  font-size: 14px;
  color: #14233a;
}
.panel-head--closed {
  margin-bottom: 1px;
}
.tri-down {
  border-left: 5px solid transparent;
  border-right: 5px solid transparent;
  border-top: 9px solid #111;
  margin-right: 7px;
  margin-top: 2px;
}
.tri-right {
  border-top: 5px solid transparent;
  border-bottom: 5px solid transparent;
  border-left: 8px solid #111;
  margin-left: 1px;
  margin-right: 8px;
  margin-top: 2px;
}
.close-box {
  width: 17px;
  height: 17px;
  margin-left: auto;
  margin-top: 2px;
  border: 1px solid #a8a8a8;
  background: #f0f0f0;
  outline: 1px solid #fff;
  outline-offset: -2px;
  font-size: 13px;
  font-weight: 700;
  line-height: 14px;
  text-align: center;
  color: #111;
  box-sizing: border-box;
}

.material {
  height: 92px;
  flex: none;
  display: flex;
  padding: 2px 2px 0 2px;
  box-sizing: border-box;
  border-bottom: 1px solid #a6a6a6;
}
.material-preview {
  width: 77px;
  height: 86px;
  box-sizing: border-box;
  border: 1px solid #a0a0a0;
  padding: 5px 0;
  background: #ffff00 content-box;
  position: relative;
}
.preview-corner {
  position: absolute;
  right: 2px;
  bottom: 6px;
  border-left: 10px solid transparent;
  border-bottom: 10px solid #ddddc8;
}
.material-name {
  width: 161px;
  height: 23px;
  margin-left: 3px;
  box-sizing: border-box;
  border: 1px solid #d8d8d8;
  border-left-color: #888;
  border-top-color: #888;
  background: #fff;
  padding-left: 5px;
  font-size: 12px;
  line-height: 19px;
}
.material-actions {
  flex: 1;
  display: flex;
  flex-direction: column;
  align-items: center;
  margin-left: 3px;
}
.act-a {
  width: 14px;
  height: 18px;
  margin-top: 2px;
}
.act-b {
  width: 20px;
  height: 20px;
  margin-top: 12px;
}
.act-c {
  width: 26px;
  height: 26px;
  margin-top: 7px;
  background: linear-gradient(225deg, #fff 50%, #a7b5c2 50%);
}

.tabs {
  height: 33px;
  flex: none;
  display: flex;
  align-items: flex-end;
  font-size: 12px;
  position: relative;
}
.tab {
  height: 22px;
  box-sizing: border-box;
  padding: 1px 0 0 4px;
  border: 1px solid #d8d8d8;
  border-right: 1px solid #909090;
  border-bottom: none;
  border-top-color: #fff;
  width: 46px;
}
.tab--on {
  width: 50px;
  height: 24px;
  padding-left: 7px;
  background: #f4f4f4;
  border-top-color: #d0d0d0;
}
.dropper {
  position: absolute;
  right: 5px;
  top: 5px;
  width: 20px;
  height: 20px;
}
.nav-row {
  height: 33px;
  flex: none;
  display: flex;
  align-items: center;
  padding-left: 8px;
  box-sizing: border-box;
  border-bottom: 1px solid #a6a6a6;
}
.nav-row--second {
  height: 36px;
}
.nav-arrow {
  width: 16px;
  height: 16px;
  margin-right: 12px;
  margin-top: -5px;
}
.nav-home {
  width: 20px;
  height: 20px;
  margin-left: -2px;
  margin-right: 6px;
  margin-top: -5px;
}
.combo {
  width: 156px;
  height: 25px;
  flex: none;
  display: flex;
  align-items: center;
  justify-content: space-between;
  box-sizing: border-box;
  margin-top: 2px;
  border: 1px solid #d8d8d8;
  border-left: 2px solid #8a8a8a;
  border-top: 2px solid #8a8a8a;
  background: #fff;
  padding-left: 3px;
  font-size: 12px;
}
.combo-btn {
  width: 20px;
  height: 22px;
  background: #f0f0f0;
  border-left: 1px solid #ccc;
  border-right: 2px solid #8a8a8a;
  border-bottom: 2px solid #8a8a8a;
  box-sizing: border-box;
  position: relative;
}
.combo-btn::after {
  content: "";
  position: absolute;
  left: 4px;
  top: 9px;
  border-left: 4.5px solid transparent;
  border-right: 4.5px solid transparent;
  border-top: 5px solid #111;
}
.nav-export {
  width: 22px;
  height: 22px;
  margin-left: 6px;
  margin-top: -4px;
}

.swatch-grid {
  display: grid;
  grid-template-columns: repeat(4, 62px);
  grid-auto-rows: 62px;
  gap: 2px;
  padding-left: 3px;
  background: #fff;
  align-content: start;
}
.swatch-grid--metal {
  height: 244px;
  flex: none;
  padding-top: 4px;
  box-sizing: border-box;
}
.swatch-grid--colors {
  flex: 1;
  grid-template-columns: repeat(3, 62px);
  margin-top: -54px;
}
.swatch {
  box-sizing: border-box;
  border: 1px solid #a0a0a0;
  padding: 1px;
  background-clip: content-box;
  background-origin: content-box;
  overflow: hidden;
}
.swatch-art {
  display: block;
  width: 100%;
  height: 100%;
}
.tex-1 { background-image: linear-gradient(#b2b2b0, #bcbcba 35%, #aeaeac 60%, #b8b8b6); }
.tex-2 { background-image: radial-gradient(circle at 30% 40%, #dfe6ee, transparent 45%), radial-gradient(circle at 75% 70%, #dce4ec, transparent 40%), linear-gradient(#c8d4e2, #ccd7e4); }
.tex-3 { background-image: linear-gradient(90deg, #fff, #8f8f8f 18%, #d8d8d8 34%, #f4f4f4 50%, #8e8e8e 70%, #dcdcdc 84%, #fff); }
.tex-4 { background-image: linear-gradient(#8f8f8f, #8a8a8a); }
.tex-5 { background-image: linear-gradient(#9ba3a6, #9ea6a9); }
.tex-6 { background-image: linear-gradient(#b4603c, #b4603c); }
.tex-7 { background-image: linear-gradient(90deg, #6c6e68, #686a64 85%, #55574f 92%, #666); }
.tex-8 { background-image: linear-gradient(#e9e9ee, #ebebf0); }
.tex-9 { background-image: linear-gradient(#5a6073, #5a6073); }
.tex-10 { background-image: linear-gradient(#c4c4c4, #c4c4c4); }
.tex-11 { background-image: linear-gradient(#a9b0b3, #adb4b7); }

.split {
  height: 9px;
  flex: none;
  box-sizing: border-box;
  border-top: 1px solid #f0f0f0;
  background: linear-gradient(#f0f0f0 3px, #707070 3px, #707070 5px, #f0f0f0 5px);
}
.sub-head {
  height: 23px;
  flex: none;
  box-sizing: border-box;
  border-top: 1px solid #a6a6a6;
  border-bottom: 1px solid #a6a6a6;
  background: #e1e1e1;
  padding-left: 4px;
  font-size: 12px;
  line-height: 21px;
}
.color-list {
  height: 206px;
  flex: none;
  display: flex;
  overflow: hidden;
  background: #fff;
}
.inner-scroll {
  width: 19px;
  flex: none;
  display: flex;
  flex-direction: column;
  align-items: center;
  background: #f0f0f0;
}
.chev {
  width: 12px;
  height: 8px;
  flex: none;
  margin-top: 5px;
}
.chev--end {
  margin-top: auto;
  margin-bottom: 7px;
}
.thumb {
  width: 19px;
  height: 21px;
  flex: none;
  margin-top: 62px;
  background: #c8c8c8;
}
.list-foot {
  height: 6px;
  flex: none;
  margin: 1px 0;
  box-sizing: border-box;
  border: 1px solid #b0b0b0;
}
.outer-scroll {
  flex: 1;
  display: flex;
  flex-direction: column;
  align-items: center;
}
.chev--outer {
  margin-top: 8px;
}
.thumb--outer {
  margin-top: 656px;
}
.chev--outer-end {
  margin-top: auto;
  margin-bottom: 4px;
}

.statusbar {
  height: 34px;
  flex: none;
  display: flex;
  align-items: center;
  background: #f0f0f0;
  padding-left: 6px;
  font-size: 15px;
}
.status-icon {
  width: 18px;
  height: 18px;
  margin-right: 17px;
}
.status-sep {
  width: 1px;
  height: 16px;
  margin-left: -3px;
  background: #8c8c8c;
}
.status-text {
  margin-left: 9px;
}
.status-sep--right {
  margin-left: auto;
}
.measure-label {
  margin-left: 10px;
  font-size: 14.7px;
  color: #14233a;
}
.measure-input {
  width: 250px;
  height: 23px;
  margin: 0 5px 0 9px;
  box-sizing: border-box;
  border: 1px solid #a8bbd4;
  background: #eeeeee;
}

.taskbar {
  height: 50px;
  flex: none;
  display: flex;
  align-items: stretch;
  background:
    repeating-linear-gradient(97deg, rgba(0, 0, 0, .22) 0 1px, transparent 1px 137px),
    repeating-linear-gradient(85deg, rgba(70, 60, 45, .18) 0 2px, transparent 2px 89px),
    #1f1913;
  color: #e6e6e6;
}
.start {
  width: 60px;
  flex: none;
  display: flex;
  align-items: center;
  justify-content: center;
}
.start svg {
  width: 20px;
  height: 20px;
}
.search {
  width: 430px;
  flex: none;
  display: flex;
  align-items: center;
  background: #333333;
}
.cortana {
  width: 21px;
  height: 21px;
  margin-left: 11px;
  border: 3px solid #e4e4e4;
  border-radius: 50%;
}
.search-text {
  margin-left: 7px;
  font-size: 16.4px;
  color: #a3a3a3;
}
.mic {
  width: 14px;
  height: 22px;
  margin-left: auto;
  margin-right: 19px;
}
.app-btn {
  width: 62px;
  flex: none;
  display: flex;
  align-items: center;
  justify-content: center;
  box-sizing: border-box;
}
.app-btn--open {
  background: linear-gradient(#76b9ed, #76b9ed) center bottom / 51px 3px no-repeat;
}
.app-btn--current {
  background: linear-gradient(#76b9ed, #76b9ed) center bottom / 100% 3px no-repeat, #4d4842;
}
.ico {
  width: 30px;
  height: 32px;
}
.ico-task {
  width: 24px;
  height: 20px;
}
.s-tile {
  width: 30px;
  height: 30px;
  background: #e8304e;
  color: #fff;
  font-size: 29px;
  font-weight: 800;
  line-height: 30px;
  text-align: center;
}
.sys-tray {
  margin-left: auto;
  display: flex;
  align-items: center;
  padding-right: 31px;
  font-size: 14px;
}
.sys-chev {
  width: 16px;
  height: 9px;
  margin-right: 12px;
}
.sys-ico {
  width: 20px;
  height: 18px;
  margin-right: 10px;
}
.sys-lang {
  width: 42px;
  display: flex;
  flex-direction: column;
  align-items: center;
  gap: 4px;
  margin-left: -2px;
  margin-right: 2px;
}
.sys-clock {
  width: 92px;
  display: flex;
  flex-direction: column;
  align-items: center;
  gap: 4px;
}
.sys-note {
  width: 20px;
  height: 18px;
  margin-left: 15px;
}
.mcafee {
  font-family: "Liberation Sans", sans-serif;
  font-size: 15px;
  font-weight: 700;
  text-anchor: middle;
  fill: #fff;
}
</style>
